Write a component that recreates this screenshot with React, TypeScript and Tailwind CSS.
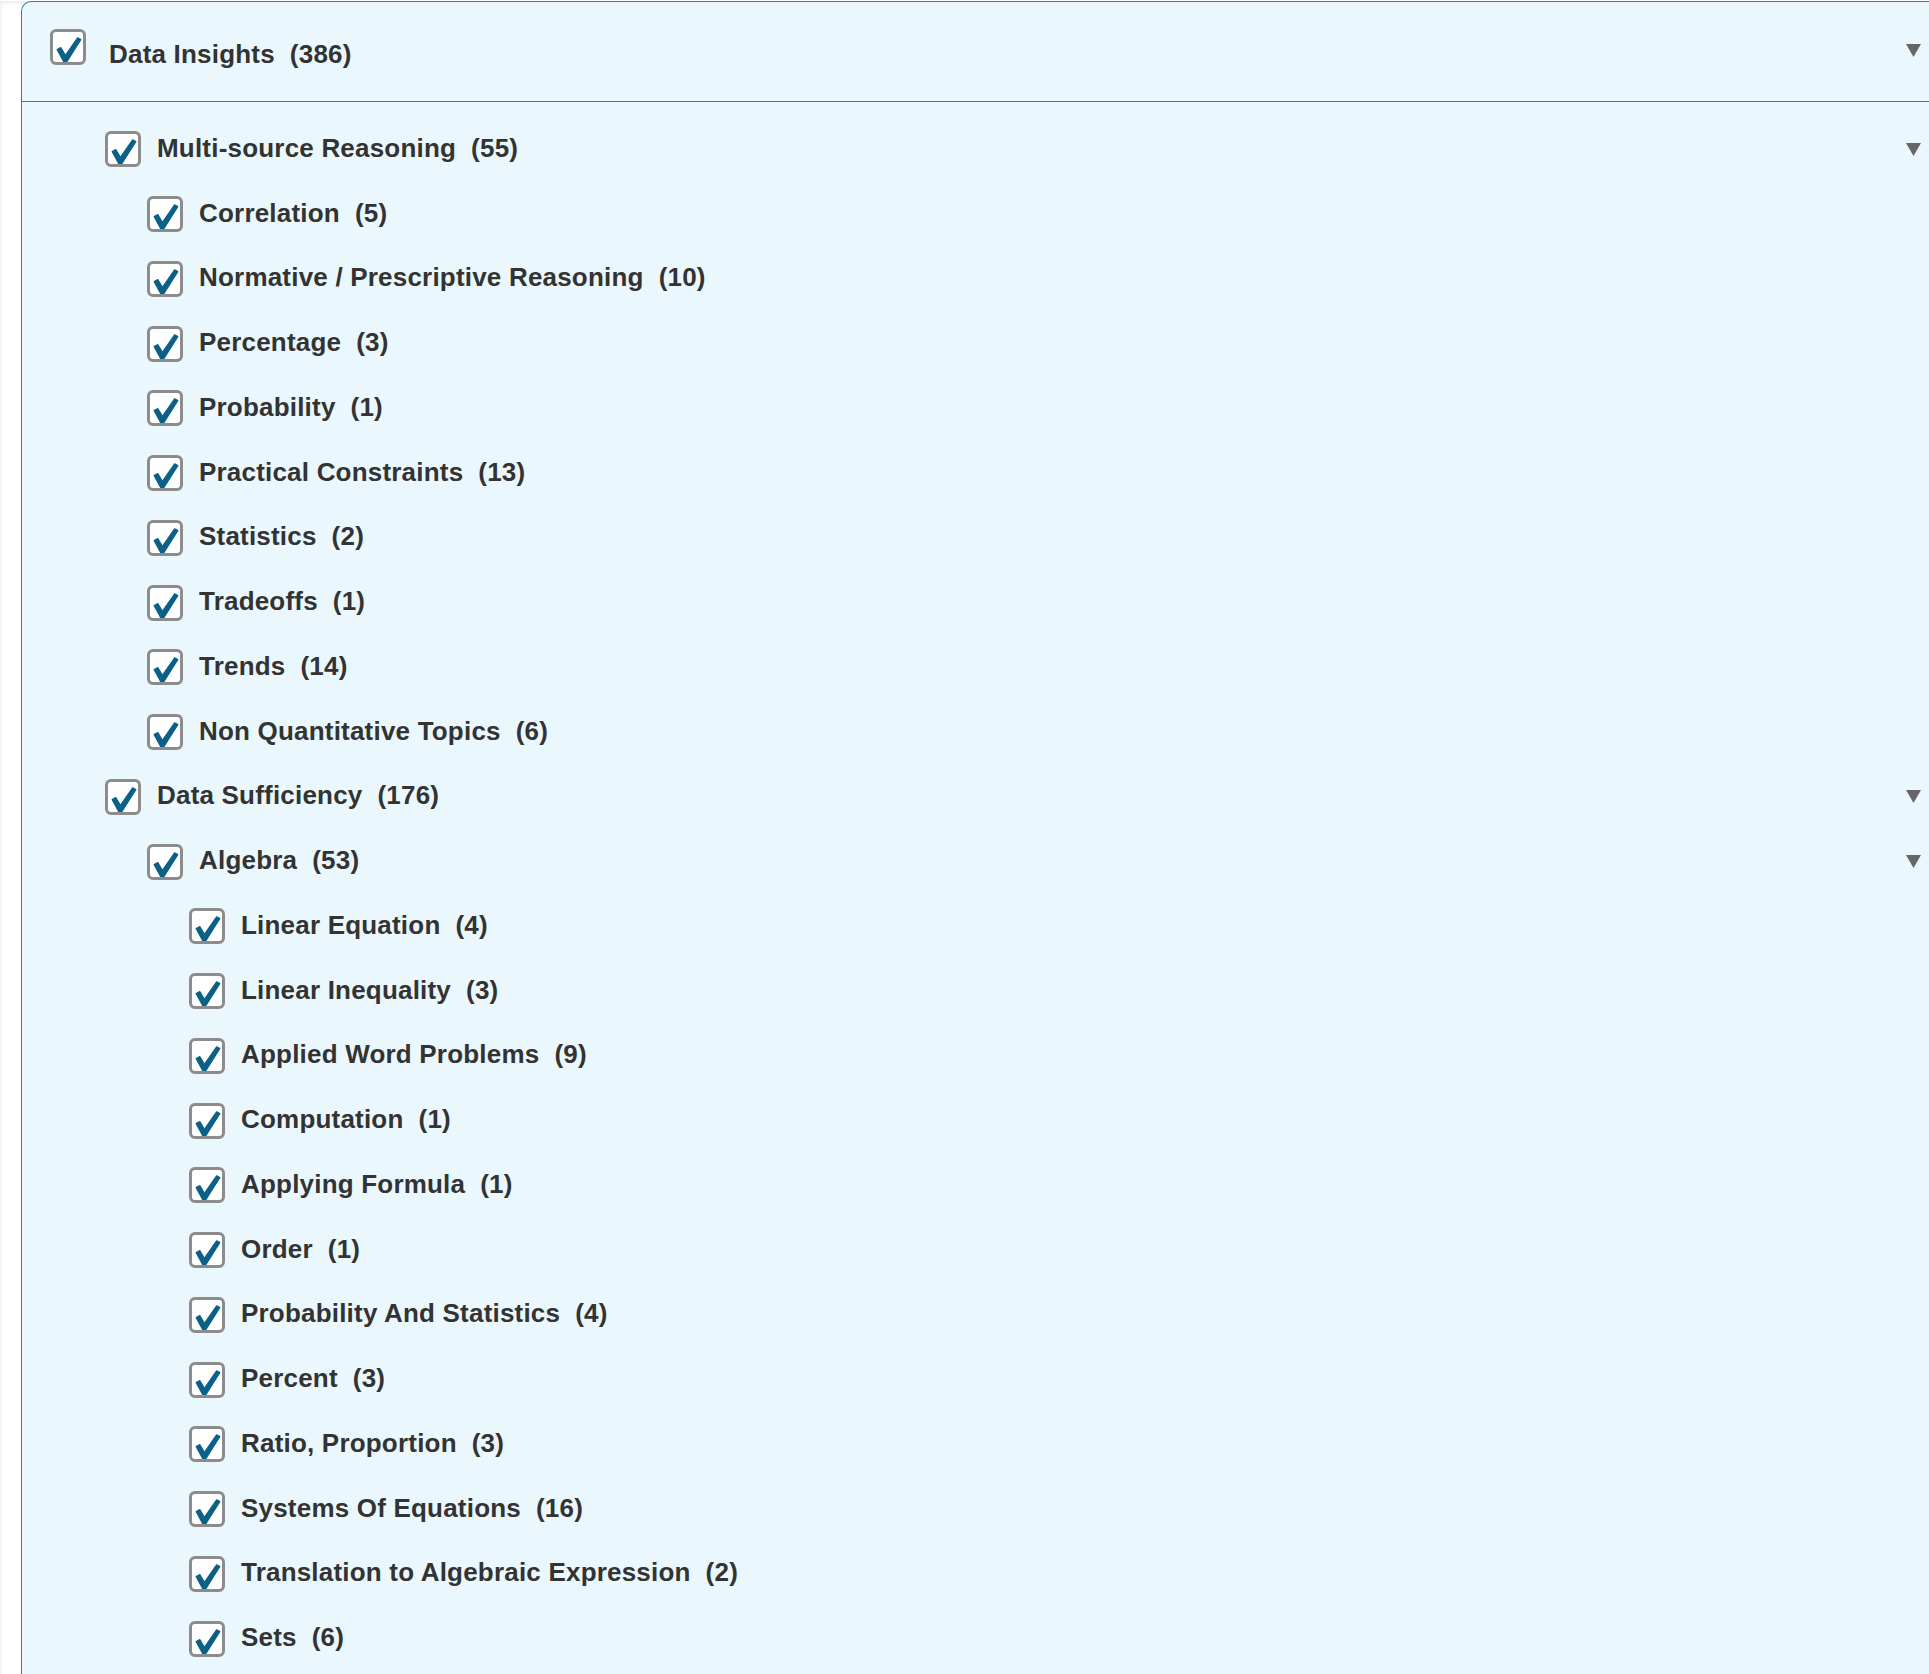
type Node = { name: string; count: number; children?: Node[] };

const tree: Node = {
  name: 'Data Insights',
  count: 386,
  children: [
    {
      name: 'Multi-source Reasoning',
      count: 55,
      children: [
        { name: 'Correlation', count: 5 },
        { name: 'Normative / Prescriptive Reasoning', count: 10 },
        { name: 'Percentage', count: 3 },
        { name: 'Probability', count: 1 },
        { name: 'Practical Constraints', count: 13 },
        { name: 'Statistics', count: 2 },
        { name: 'Tradeoffs', count: 1 },
        { name: 'Trends', count: 14 },
        { name: 'Non Quantitative Topics', count: 6 },
      ],
    },
    {
      name: 'Data Sufficiency',
      count: 176,
      children: [
        {
          name: 'Algebra',
          count: 53,
          children: [
            { name: 'Linear Equation', count: 4 },
            { name: 'Linear Inequality', count: 3 },
            { name: 'Applied Word Problems', count: 9 },
            { name: 'Computation', count: 1 },
            { name: 'Applying Formula', count: 1 },
            { name: 'Order', count: 1 },
            { name: 'Probability And Statistics', count: 4 },
            { name: 'Percent', count: 3 },
            { name: 'Ratio, Proportion', count: 3 },
            { name: 'Systems Of Equations', count: 16 },
            { name: 'Translation to Algebraic Expression', count: 2 },
            { name: 'Sets', count: 6 },
          ],
        },
      ],
    },
  ],
};

function CheckBox() {
  return (
    <span className="relative block size-[36px] shrink-0 rounded-[6px] border-[3px] border-[#8c8c8c] bg-white">
      <svg
        className="absolute -left-[3px] -top-[3px] overflow-visible"
        width="36"
        height="36"
        viewBox="0 0 36 36"
      >
        {/* tapered tick, thick at the bottom */}
        <path
          d="M7.2 20.6 L10.8 18.6 L15.4 26.4 L27.6 8.8 L30.8 10.6 L17 32.4 L13.6 32.4 Z"
          fill="#0b6088"
          stroke="#0b6088"
          strokeWidth="1.2"
          strokeLinejoin="round"
        />
      </svg>
    </span>
  );
}

function Arrow() {
  return (
    <svg width="15" height="13" viewBox="0 0 15 13" className="shrink-0">
      <polygon points="0,0 15,0 7.5,13" fill="#666666" />
    </svg>
  );
}

function Label({ node }: { node: Node }) {
  return (
    <span className="whitespace-nowrap text-[26px] leading-[30px] font-bold tracking-[0.2px] text-[#333333]">
      {node.name}
      <span className="ml-[15px]">({node.count})</span>
    </span>
  );
}

function Row({ node }: { node: Node }) {
  return (
    <li>
      <div className="flex h-[64.75px] items-center pr-[8px]">
        <CheckBox />
        <div className="mb-[2px] ml-[16px] flex-1">
          <Label node={node} />
        </div>
        {node.children && <Arrow />}
      </div>
      {node.children && (
        <ul className="pl-[42px]">
          {node.children.map((c) => (
            <Row key={c.name} node={c} />
          ))}
        </ul>
      )}
    </li>
  );
}

export default function App() {
  return (
    <div className="min-h-screen bg-white font-['Liberation_Sans',Arial,sans-serif] shadow-[inset_0_1px_4px_rgba(0,0,0,0.12)]">
      <div className="ml-[21px] mt-[1px] rounded-tl-[10px] border-l border-t border-[#1b86b6] bg-[#eaf8fe] pb-[20px]">
        <header className="flex h-[100px] items-start border-b border-[#1b86b6] pl-[28px] pr-[8px]">
          <div className="mt-[27px]">
            <CheckBox />
          </div>
          <div className="ml-[23px] mt-[37px] flex-1">
            <Label node={tree} />
          </div>
          <div className="mt-[42px]">
            <Arrow />
          </div>
        </header>
        <ul className="pl-[83px] pt-[15px]">
          {tree.children!.map((c) => (
            <Row key={c.name} node={c} />
          ))}
        </ul>
      </div>
    </div>
  );
}
